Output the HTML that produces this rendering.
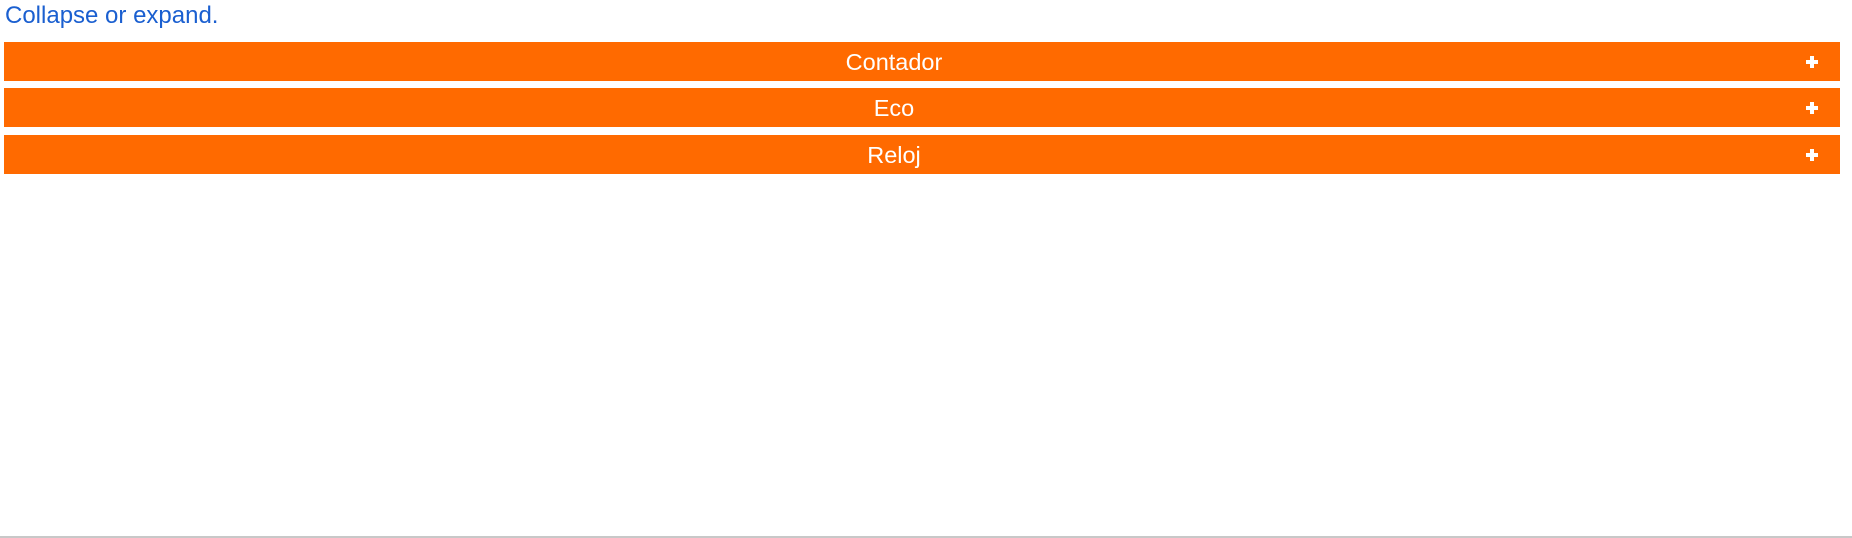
<!DOCTYPE html>
<html><head><style>
body{margin:0;width:1852px;height:538px;background:#fff;position:relative;font-family:"Liberation Sans",sans-serif;overflow:hidden}
.t{position:absolute;left:5px;top:2px;font-size:24px;color:#1a5fd0}
.bar{position:absolute;left:4px;width:1836px;height:39px;background:#ff6a00;color:#fff;font-size:23.5px;line-height:40px;text-align:center;box-sizing:border-box;padding-right:56px}
.p{position:absolute;left:1802px;top:14px;width:12px;height:12px}
.p:before{content:"";position:absolute;left:0;top:4px;width:12px;height:4px;background:#fff}
.p:after{content:"";position:absolute;left:4px;top:0;width:4px;height:12px;background:#fff}
.line{position:absolute;left:0;top:536px;width:1852px;height:2px;background:#c8c8c8}
</style></head><body>
<div class="t">Collapse or expand.</div>
<div class="bar" style="top:42px">Contador<span class="p"></span></div>
<div class="bar" style="top:88px">Eco<span class="p"></span></div>
<div class="bar" style="top:135px">Reloj<span class="p"></span></div>
<div class="line"></div>
</body></html>
